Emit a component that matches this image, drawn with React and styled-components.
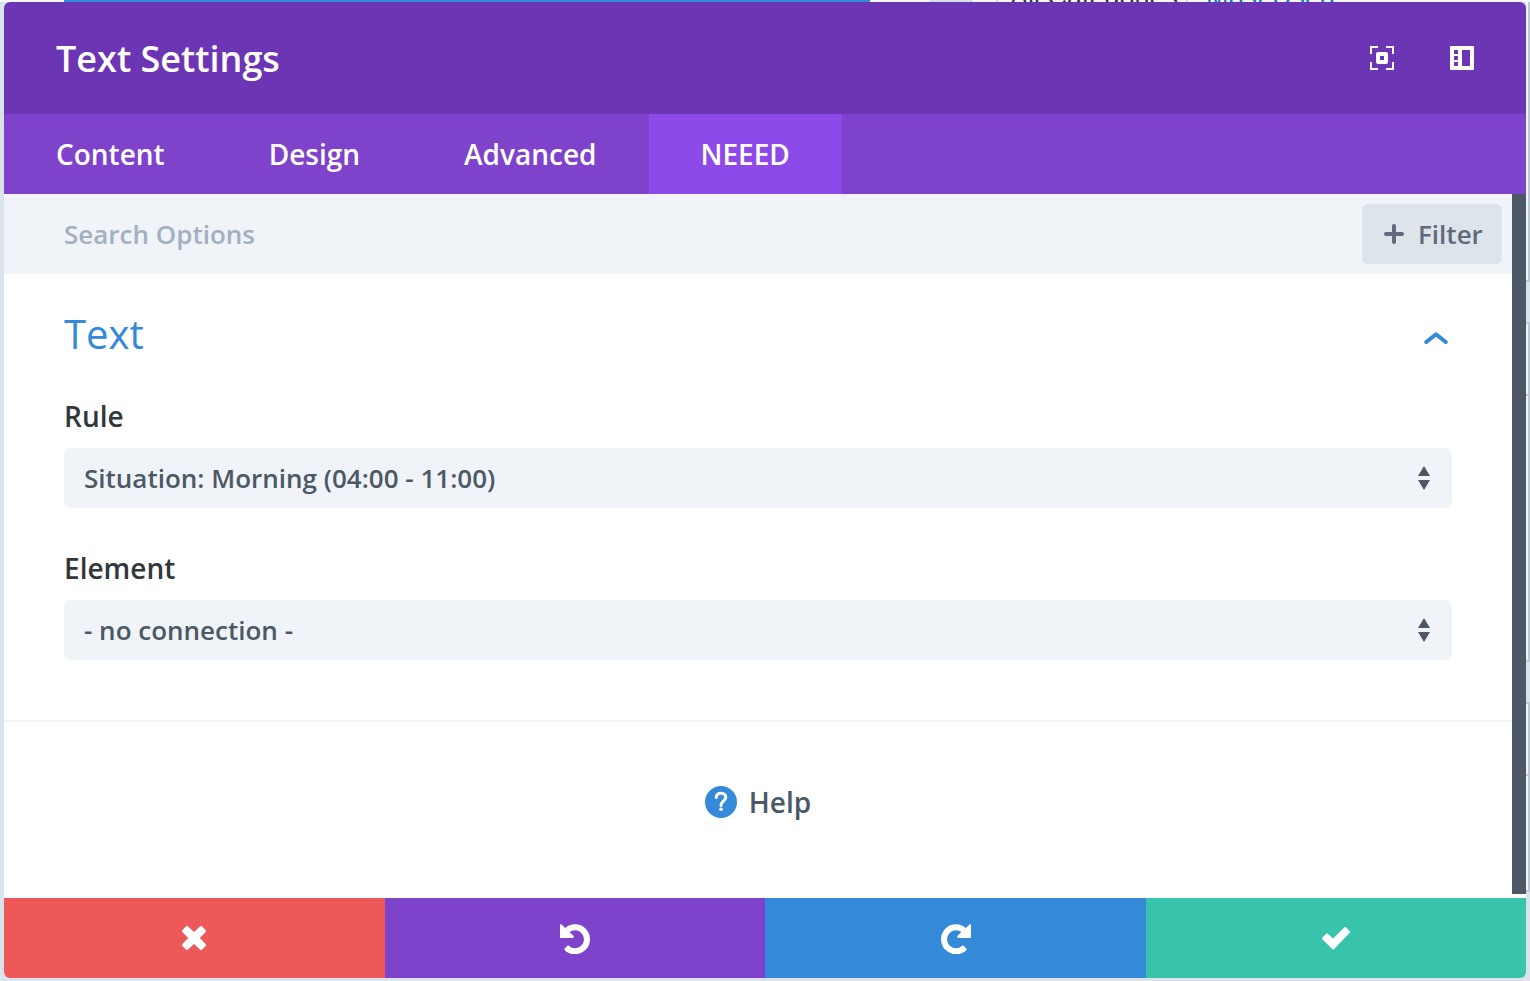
import React from "react";
import styled, { createGlobalStyle } from "styled-components";

const GlobalStyle = createGlobalStyle`
  *, *::before, *::after { box-sizing: border-box; }
  body {
    margin: 0;
    background: #dbe4ec;
    font-family: "Open Sans", "Noto Sans", sans-serif;
  }
  button, input, select { font: inherit; }
`;

const Page = styled.div`
  display: flex;
  flex-direction: column;
  min-height: 100vh;
  padding-bottom: 3px;
`;

const PageStrip = styled.div`
  display: flex;
  height: 2px;
  padding-left: 4px;
  overflow: hidden;
  background: #f4f7fd;
  font-family: "Liberation Sans", Arial, sans-serif;
  font-size: 27px;
`;

const PageBar = styled.div`
  width: 806px;
  margin-left: 60px;
  background: #3489d8;
`;

const PageTab = styled.div`
  width: 42px;
  margin: 0 24px 0 60px;
  background: #d9dfe8;
  border-right: 1px solid #bcc8d5;
`;

const CategoryTab = styled.div`
  height: 28px;
  margin-top: -17px;
  padding: 0 8px 0 12px;
  border: solid #ccd6e2;
  border-width: 0 2px;
  color: #32373c;
  line-height: 28px;
  white-space: nowrap;
`;

const CategoryLink = styled.a`
  height: 28px;
  margin: -17px 0 0 18px;
  color: #0f7ab5;
  line-height: 28px;
  text-decoration: none;
  white-space: nowrap;
`;

const Stage = styled.div`
  flex: 1;
  display: flex;
  padding-left: 4px;
`;

const Gutter = styled.div`
  display: flex;
  flex-direction: column;
  width: 4px;
  background: #dbe3ea;
`;

const Box = styled.div`
  height: ${(p) => p.$height}px;
  margin-top: ${(p) => p.$gap || 0}px;
  background: #f0f5fb;
  border: solid #bec9d5;
  border-width: ${(p) => (p.$open ? 0 : 2)}px 2px 2px 0;
`;

const Modal = styled.main`
  flex: 1;
  min-width: 0;
  display: flex;
  flex-direction: column;
  overflow: hidden;
  border-radius: 6px;
  background: #fff;
`;

const Header = styled.header`
  display: flex;
  align-items: center;
  justify-content: space-between;
  height: 112px;
  padding: 0 52px;
  background: #6c35b3;
`;

const Title = styled.h1`
  margin: 0;
  padding-top: 2px;
  color: #fff;
  font-size: 36px;
  font-weight: 600;
  line-height: 48px;
`;

const HeaderActions = styled.div`
  display: flex;
  gap: 56px;
`;

const IconButton = styled.button`
  display: flex;
  padding: 0;
  border: 0;
  background: none;
  color: ${(p) => p.$color || "#fff"};
  cursor: pointer;
`;

const Tabs = styled.nav`
  display: flex;
  height: 80px;
  background: #7e42cb;
`;

const Tab = styled.button`
  padding: 0 52px;
  border: 0;
  background: ${(p) => (p.$active ? "#8e4ae8" : "transparent")};
  color: #fff;
  font-size: 28px;
  font-weight: 600;
  cursor: pointer;
`;

const Body = styled.div`
  flex: 1;
  display: flex;
`;

const Content = styled.div`
  flex: 1;
  min-width: 0;
`;

const ScrollThumb = styled.div`
  width: 14px;
  margin-bottom: 4px;
  background: #4c5866;
`;

const SearchBar = styled.div`
  display: flex;
  align-items: center;
  height: 80px;
  padding: 0 10px 0 60px;
  background: #f0f4f9;
`;

const SearchInput = styled.input`
  flex: 1;
  min-width: 0;
  padding: 0;
  border: 0;
  outline: 0;
  background: transparent;
  color: #4c5866;
  font-size: 26px;
  font-weight: 600;
  &::placeholder { color: #a2b0c1; opacity: 1; }
`;

const FilterButton = styled.button`
  display: flex;
  align-items: center;
  gap: 14px;
  width: 140px;
  height: 60px;
  padding: 0 0 0 22px;
  border: 0;
  border-radius: 6px;
  background: #dde4ea;
  color: #5f6b7c;
  font-size: 26px;
  font-weight: 600;
  cursor: pointer;
`;

const Section = styled.section`
  padding: 32px 60px 60px;
  border-bottom: 2px solid #f0f4f9;
`;

const SectionHead = styled.div`
  display: flex;
  align-items: center;
  justify-content: space-between;
  height: 56px;
  margin-bottom: 36px;
  padding-right: 4px;
  button { padding-top: 8px; }
`;

const SectionTitle = styled.h2`
  margin: 0;
  color: #3489d8;
  font-size: 40px;
  font-weight: 400;
  line-height: 56px;
`;

const Field = styled.div`
  display: flex;
  flex-direction: column;
  gap: 14px;
  & + & { margin-top: 42px; }
`;

const Label = styled.label`
  color: #32373c;
  font-size: 28px;
  font-weight: 600;
  line-height: 36px;
`;

const SelectWrap = styled.div`
  position: relative;
  svg {
    position: absolute;
    top: 18px;
    right: 22px;
    pointer-events: none;
  }
`;

const Select = styled.select`
  display: block;
  appearance: none;
  width: 100%;
  height: 60px;
  padding: 0 60px 0 20px;
  border: 0;
  border-radius: 6px;
  background: #f0f4f9;
  color: #4c5866;
  font-size: 26px;
  font-weight: 600;
`;

const HelpRow = styled.div`
  display: flex;
  justify-content: center;
  padding: 60px;
`;

const HelpLink = styled.a`
  display: flex;
  align-items: center;
  gap: 12px;
  color: #4c5866;
  font-size: 28px;
  font-weight: 600;
  line-height: 40px;
  text-decoration: none;
`;

const Footer = styled.footer`
  display: grid;
  grid-template-columns: repeat(4, 1fr);
  height: 80px;
`;

const FooterButton = styled.button`
  display: flex;
  align-items: center;
  justify-content: center;
  padding: 0;
  border: 0;
  background: ${(p) => p.$color};
  color: #fff;
  cursor: pointer;
`;

const ExpandIcon = () => (
  <svg width="24" height="24" viewBox="0 0 24 24" fill="currentColor">
    <path d="M0 0h8v2H2v6H0zM16 0h8v8h-2V2h-6zM0 16h2v6h6v2H0zM22 16h2v8h-8v-2h6z" />
    <path fillRule="evenodd" d="M8 6h8a2 2 0 0 1 2 2v8a2 2 0 0 1-2 2H8a2 2 0 0 1-2-2V8a2 2 0 0 1 2-2zM10 10v4h4v-4z" />
  </svg>
);

const PanelIcon = () => (
  <svg width="24" height="24" viewBox="0 0 24 24" fill="currentColor">
    <path fillRule="evenodd" d="M1 0h22a1 1 0 0 1 1 1v22a1 1 0 0 1-1 1H1a1 1 0 0 1-1-1V1a1 1 0 0 1 1-1zM4 4v4h4V4zM4 10v4h4v-4zM4 16v4h4v-4zM12 4v16h8V4z" />
  </svg>
);

const PlusIcon = () => (
  <svg width="20" height="20" viewBox="0 0 20 20" fill="none" stroke="currentColor" strokeWidth="4" strokeLinecap="round">
    <path d="M10 2v16M2 10h16" />
  </svg>
);

const ChevronIcon = () => (
  <svg width="24" height="12" viewBox="0 0 24 12" fill="none" stroke="currentColor" strokeWidth="4" strokeLinecap="round" strokeLinejoin="round">
    <path d="M2.300 10L12 2.200L21.700 10" />
  </svg>
);

const SortIcon = () => (
  <svg width="12" height="24" viewBox="0 0 12 24" fill="#4c5866">
    <path d="M6 0l6 10H0zM0 14h12L6 24z" />
  </svg>
);

const HelpIcon = () => (
  <svg width="32" height="32" viewBox="0 0 32 32" fill="none">
    <circle cx="16" cy="16" r="16" fill="#3489d8" />
    <path d="M11.200 11.600C11.300 8.900 13.300 7.200 16 7.200c2.800 0 4.800 1.600 4.800 4.100 0 3.600-4.800 3.800-4.800 8.200" stroke="#fff" strokeWidth="3" strokeLinecap="round" />
    <circle cx="16" cy="23.300" r="1.800" fill="#fff" />
  </svg>
);

const CloseIcon = () => (
  <svg width="24" height="24" viewBox="0 0 24 24" fill="currentColor" stroke="currentColor" strokeWidth="3" strokeLinejoin="round">
    <path d="M5 1.500L12 8.200L19 1.500L22.500 5L15.800 12L22.500 19L19 22.500L12 15.800L5 22.500L1.500 19L8.200 12L1.500 5z" />
  </svg>
);

const TurnIcon = ({ flip }) => (
  <svg width="32" height="32" viewBox="0 0 32 32" fill="none">
    <g transform={flip ? "translate(32 2) scale(-1 1)" : "translate(1 2)"}>
      <path d="M7.200 6.200A12 12 0 1 1 7 24.300" stroke="currentColor" strokeWidth="6" />
      <path d="M4.600 25L8 21.700L11 24.500L7 28z" fill="currentColor" stroke="currentColor" strokeLinejoin="round" />
      <path d="M1 0.900L13.200 12.500L12.500 13.300H0.700V1z" fill="currentColor" stroke="currentColor" strokeWidth="1.400" strokeLinejoin="round" />
    </g>
  </svg>
);

const CheckIcon = () => (
  <svg width="28" height="24" viewBox="0 0 28 24" fill="currentColor" stroke="currentColor" strokeWidth="2" strokeLinejoin="round">
    <path d="M1 12.500L5 8.300L11 14L23.200 2L27 6L11.200 22.600z" />
  </svg>
);

const SelectField = ({ id, label, value }) => (
  <Field>
    <Label htmlFor={id}>{label}</Label>
    <SelectWrap>
      <Select id={id} defaultValue={value}>
        <option>{value}</option>
      </Select>
      <SortIcon />
    </SelectWrap>
  </Field>
);

const tabs = ["Content", "Design", "Advanced", "NEEED"];

export default function App() {
  return (
    <Page>
      <GlobalStyle />
      <PageStrip>
        <PageBar />
        <PageTab />
        <CategoryTab>All Categories</CategoryTab>
        <CategoryLink href="#most-used">Most Used</CategoryLink>
      </PageStrip>
      <Stage>
        <Modal>
          <Header>
            <Title>Text Settings</Title>
            <HeaderActions>
              <IconButton aria-label="Expand modal"><ExpandIcon /></IconButton>
              <IconButton aria-label="Snap to side"><PanelIcon /></IconButton>
            </HeaderActions>
          </Header>
          <Tabs>
            {tabs.map((name) => (
              <Tab key={name} $active={name === "NEEED"}>{name}</Tab>
            ))}
          </Tabs>
          <Body>
            <Content>
              <SearchBar>
                <SearchInput placeholder="Search Options" aria-label="Search Options" />
                <FilterButton><PlusIcon />Filter</FilterButton>
              </SearchBar>
              <Section>
                <SectionHead>
                  <SectionTitle>Text</SectionTitle>
                  <IconButton $color="#3489d8" aria-label="Collapse section"><ChevronIcon /></IconButton>
                </SectionHead>
                <SelectField id="rule" label="Rule" value="Situation: Morning (04:00 - 11:00)" />
                <SelectField id="element" label="Element" value="- no connection -" />
              </Section>
              <HelpRow>
                <HelpLink href="#help"><HelpIcon />Help</HelpLink>
              </HelpRow>
            </Content>
            <ScrollThumb />
          </Body>
          <Footer>
            <FooterButton $color="#ed5859" aria-label="Discard"><CloseIcon /></FooterButton>
            <FooterButton $color="#7e42cb" aria-label="Undo"><TurnIcon /></FooterButton>
            <FooterButton $color="#3489d8" aria-label="Redo"><TurnIcon flip /></FooterButton>
            <FooterButton $color="#37c4ab" aria-label="Save"><CheckIcon /></FooterButton>
          </Footer>
        </Modal>
        <Gutter>
          <Box $height={280} $open />
          <Box $height={74} $gap={40} />
          <Box $height={266} $open />
          <Box $height={74} $gap={40} />
          <Box $height={116} $open />
        </Gutter>
      </Stage>
    </Page>
  );
}
